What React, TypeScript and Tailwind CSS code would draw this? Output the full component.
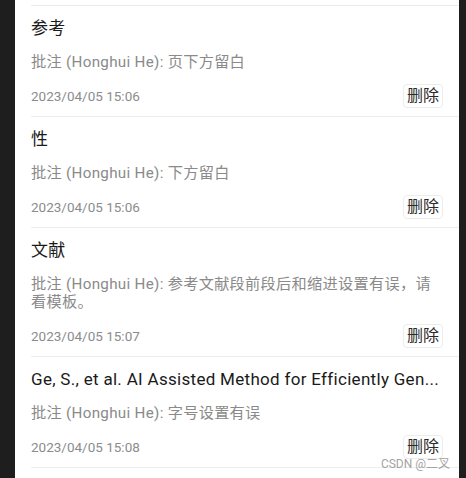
import React from 'react';

type Note = { title: string; comment: string; time: string };

const notes: Note[] = [
  { title: '参考', comment: '批注 (Honghui He): 页下方留白', time: '2023/04/05 15:06' },
  { title: '性', comment: '批注 (Honghui He): 下方留白', time: '2023/04/05 15:06' },
  {
    title: '文献',
    comment: '批注 (Honghui He): 参考文献段前段后和缩进设置有误，请看模板。',
    time: '2023/04/05 15:07',
  },
  {
    title: 'Ge, S., et al. AI Assisted Method for Efficiently Gen...',
    comment: '批注 (Honghui He): 字号设置有误',
    time: '2023/04/05 15:08',
  },
];

const font = { fontFamily: 'Roboto, "Noto Sans CJK SC", sans-serif' };

const NoteRow: React.FC<{ note: Note }> = ({ note }) => (
  <div className="border-t border-[#ececec] pt-[10px] pb-[8px] pr-[16px]">
    <div className="h-[24px] text-[17px] leading-[24px] tracking-[0.3px] text-[#1a1a1a] whitespace-nowrap overflow-hidden text-ellipsis">
      {note.title}
    </div>
    <p className="mt-[13px] pr-[8px] text-[15.2px] leading-[18px] tracking-[0.3px] text-[#8a8a8a]">
      {note.comment}
    </p>
    <div className="mt-[13px] flex items-center justify-between h-[24px]">
      <span className="text-[13.5px] text-[#8c8c8c]">{note.time}</span>
      <button className="h-[24px] w-[40px] rounded-[4px] border border-[#ececec] bg-white text-[16px] leading-none text-[#2a2a2a]">
        删除
      </button>
    </div>
  </div>
);

export default function App() {
  return (
    <div className="relative w-[466px] h-[478px] bg-[#1e1e1e] overflow-hidden flex" style={font}>
      <div className="ml-[15px] w-[444px] h-full bg-white">
        <div className="pl-[16px] pt-[5px]">
          {notes.map((n, i) => (
            <NoteRow key={i} note={n} />
          ))}
          <div className="border-t border-[#ececec]" />
        </div>
      </div>
      {/* watermark */}
      <span className="absolute right-[16px] bottom-[8px] text-[12px] leading-none text-[#a3a3a3]">
        CSDN @二叉
      </span>
    </div>
  );
}
